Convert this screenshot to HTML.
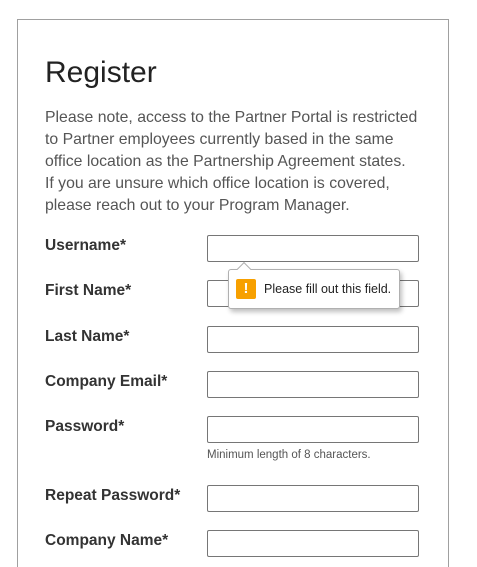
<!DOCTYPE html>
<html><head><style>
*{margin:0;padding:0;box-sizing:border-box}
html,body{width:477px;height:567px;overflow:hidden}
body{background:#fff;font-family:"Liberation Sans",sans-serif;position:relative}
.box{position:absolute;left:17px;top:19px;width:432px;height:548px;border:1px solid #a0a0a0;border-bottom:none}
h1{position:absolute;left:45px;top:56px;font-size:30px;font-weight:normal;color:#222}
p{position:absolute;left:45px;top:107px;font-size:15.8px;line-height:22px;color:#555;white-space:nowrap}
.l{position:absolute;left:45px;font-size:15.5px;font-weight:bold;color:#333}
.i{position:absolute;left:207px;width:212px;height:27px;border:1px solid #767676;border-radius:2px;background:#fff}
.h{position:absolute;left:207px;top:449px;font-size:11.5px;color:#555}
.tip{position:absolute;left:228px;top:269px;width:172px;height:40px;border:1px solid #b0b0b0;border-radius:3px;background:#fff;box-shadow:2px 3px 5px rgba(0,0,0,.25)}
.tip:before{content:"";position:absolute;left:10px;top:-6px;width:9px;height:9px;background:#fff;border-left:1px solid #b0b0b0;border-top:1px solid #b0b0b0;transform:rotate(45deg)}
.ic{position:absolute;left:7px;top:9px;width:20px;height:20px;background:#f7a000;border-radius:2px;color:#fff;font-weight:bold;font-size:15px;text-align:center;line-height:20px}
.tt{position:absolute;left:35px;top:12px;font-size:12.5px;color:#222}
</style></head><body>
<div class="box"></div>
<h1>Register</h1>
<p>Please note, access to the Partner Portal is restricted<br>to Partner employees currently based in the same<br>office location as the Partnership Agreement states.<br>If you are unsure which office location is covered,<br>please reach out to your Program Manager.</p>
<div class="l" style="top:237px">Username*</div><div class="i" style="top:235px"></div>
<div class="l" style="top:282px">First Name*</div><div class="i" style="top:280px"></div>
<div class="l" style="top:328px">Last Name*</div><div class="i" style="top:326px"></div>
<div class="l" style="top:373px">Company Email*</div><div class="i" style="top:371px"></div>
<div class="l" style="top:418px">Password*</div><div class="i" style="top:416px"></div>
<div class="h">Minimum length of 8 characters.</div>
<div class="l" style="top:487px">Repeat Password*</div><div class="i" style="top:485px"></div>
<div class="l" style="top:532px">Company Name*</div><div class="i" style="top:530px"></div>
<div class="tip"><div class="ic">!</div><div class="tt">Please fill out this field.</div></div>
</body></html>
